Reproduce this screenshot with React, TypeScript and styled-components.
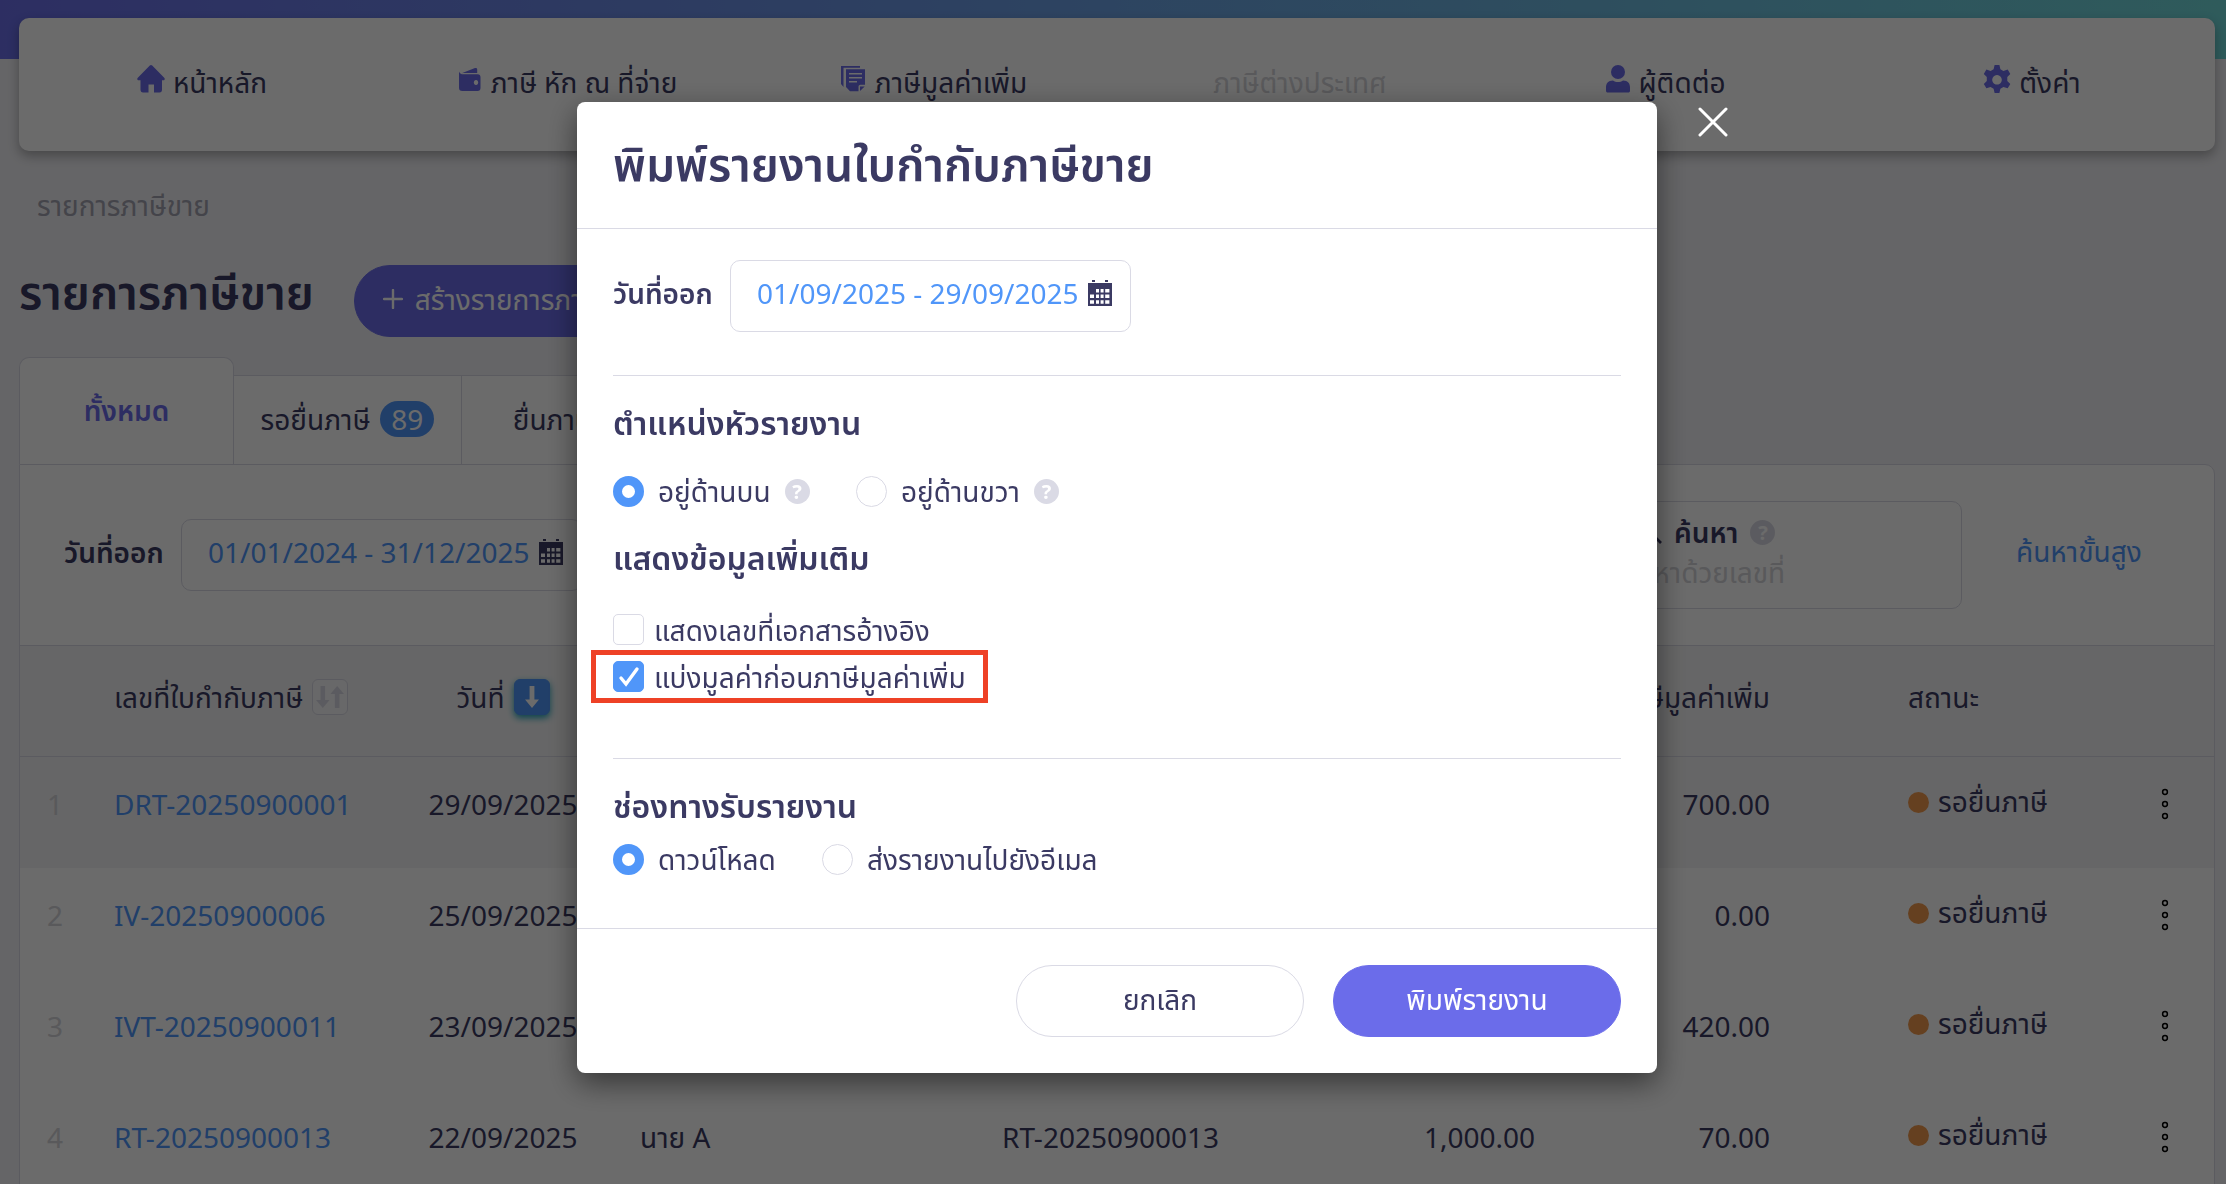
import React from "react";
import styled, { createGlobalStyle, css } from "styled-components";

const ink = "#3b3a63";
const blue = "#5096f9";
const purple = "#6b6cea";
const line = "#dadae5";

const GlobalStyle = createGlobalStyle`
  *, *::before, *::after { box-sizing: border-box; }
  body {
    margin: 0;
    overflow: hidden;
    background: #f1f1f5;
    color: ${ink};
    font-family: "Noto Sans", "Noto Sans Thai", sans-serif;
    font-size: 28px;
    font-weight: 400;
    line-height: 40px;
  }
  button, input { font: inherit; color: inherit; }
  a { color: inherit; text-decoration: none; }
  h1, h2, h3, p { margin: 0; }
`;

const Page = styled.div`
  height: 100vh;
  overflow: hidden;
  padding: 18px 11px 0 19px;
  background: linear-gradient(90deg, #6b6fea 0%, #6da3e6 50%, #70d9da 100%) 0 0 / 100% 59px no-repeat;
`;

const Nav = styled.nav`
  display: grid;
  grid-template-columns: repeat(6, 1fr);
  height: 133px;
  padding-top: 44px;
  background: #fff;
  border-radius: 10px;
  box-shadow: 0 5px 12px rgba(0, 0, 0, 0.3);
`;

const NavLink = styled.a<{ $muted?: boolean }>`
  display: flex;
  justify-content: center;
  gap: 8px;
  height: 44px;
  white-space: nowrap;
  color: ${(p) => (p.$muted ? "#d3d3d8" : ink)};
  svg { flex: none; margin-top: 3px; fill: ${purple}; }
`;

const Crumb = styled.p`
  padding: 34px 18px 0;
  color: #a2a2b0;
`;

const TitleRow = styled.header`
  display: flex;
  align-items: flex-start;
  gap: 40px;
  margin-top: 40px;
  height: 72px;
`;

const PageTitle = styled.h1`
  min-width: 292px;
  font-size: 46px;
  line-height: 52px;
  font-weight: 600;
  white-space: nowrap;
`;

const buttonBase = css`
  height: 72px;
  padding: 0 28px 4px;
  border-radius: 36px;
  border: 1px solid ${purple};
  background: ${purple};
  color: #fff;
  white-space: nowrap;
`;

const CreateButton = styled.button`
  ${buttonBase}
  display: flex;
  align-items: center;
  gap: 12px;
  width: 360px;
`;

const Tabs = styled.div`
  display: flex;
  align-items: flex-end;
  margin-top: 20px;
`;

const Tab = styled.button<{ $active?: boolean }>`
  display: flex;
  align-items: center;
  justify-content: center;
  gap: 10px;
  width: 228px;
  height: 89px;
  padding: 0 0 2px;
  border: 1px solid ${line};
  border-width: 1px 1px 0 0;
  background: #fff;
  white-space: nowrap;
  ${(p) =>
    p.$active &&
    css`
      width: 215px;
      height: 107px;
      border-width: 1px 1px 0 1px;
      border-radius: 10px 10px 0 0;
      color: ${purple};
      font-weight: 600;
    `}
`;

const Badge = styled.span`
  padding: 0 11px;
  border-radius: 18px;
  background: ${blue};
  color: #fff;
  line-height: 36px;
`;

const Panel = styled.section`
  border: 1px solid ${line};
  border-radius: 0 10px 0 0;
  background: #fff;
`;

const Filters = styled.div`
  display: flex;
  align-items: center;
  height: 180px;
  padding: 0 70px 0 44px;
`;

const FieldLabel = styled.label`
  flex: none;
  width: 117px;
  padding-bottom: 6px;
  font-weight: 600;
  white-space: nowrap;
`;

const DateBox = styled.div`
  display: flex;
  align-items: center;
  gap: 8px;
  width: 401px;
  height: 72px;
  padding: 0 18px 6px 26px;
  border: 1px solid ${line};
  border-radius: 10px;
  background: #fff;
  input {
    flex: 1;
    min-width: 0;
    padding: 0;
    border: 0;
    outline: 0;
    background: none;
    color: ${blue};
  }
`;

const SearchBox = styled.div`
  width: 360px;
  height: 108px;
  margin-left: auto;
  padding: 10px 16px;
  border: 1px solid ${line};
  border-radius: 10px;
  label {
    display: flex;
    align-items: center;
    gap: 12px;
    padding-left: 20px;
    font-weight: 600;
  }
  input {
    width: 100%;
    height: 40px;
    padding: 0;
    border: 0;
    outline: 0;
    background: none;
  }
  input::placeholder { color: #d3d3d8; opacity: 1; }
`;

const AdvancedLink = styled.a`
  width: 128px;
  margin-left: 54px;
  padding-bottom: 8px;
  color: ${blue};
  white-space: nowrap;
`;

const Help = styled.span`
  flex: none;
  width: 25px;
  height: 25px;
  border-radius: 50%;
  background: ${line};
  color: #fff;
  font-size: 20px;
  font-weight: 700;
  line-height: 25px;
  text-align: center;
`;

const Table = styled.table`
  width: 100%;
  table-layout: fixed;
  border-collapse: separate;
  border-spacing: 0;
  white-space: nowrap;
`;

const HeadRow = styled.tr`
  height: 112px;
  background: #f4f4f5;
`;

const Row = styled.tr<{ $shaded?: boolean }>`
  height: 111px;
  background: ${(p) => (p.$shaded ? "#f4f4f5" : "#fff")};
`;

type CellProps = { $align?: "left" | "center" | "right"; $indent?: number };

const Th = styled.th<CellProps>`
  padding: 0 20px 8px ${(p) => p.$indent ?? 20}px;
  border: 1px solid ${line};
  border-width: 1px 0;
  text-align: ${(p) => p.$align ?? "left"};
  font-weight: 400;
`;

const Td = styled.td<CellProps>`
  padding: 0 20px 18px ${(p) => p.$indent ?? 20}px;
  text-align: ${(p) => p.$align ?? "left"};
  a { color: ${blue}; }
`;

const RowNumber = styled(Td)`
  color: #d3d3d8;
`;

const HeadLabel = styled.span`
  display: inline-flex;
  align-items: center;
  gap: 9px;
`;

const SortButton = styled.button<{ $active?: boolean }>`
  display: flex;
  align-items: center;
  justify-content: center;
  width: 36px;
  height: 36px;
  padding: 0;
  border: 1px solid ${(p) => (p.$active ? blue : line)};
  border-radius: 6px;
  background: ${(p) => (p.$active ? blue : "#f8f8f9")};
  color: ${(p) => (p.$active ? "#fff" : line)};
  box-shadow: ${(p) => (p.$active ? "0 3px 7px #1aa0b8" : "none")};
`;

const Status = styled.span`
  display: flex;
  align-items: center;
  gap: 9px;
  padding-bottom: 6px;
  &::before {
    content: "";
    width: 21px;
    height: 21px;
    margin-top: 4px;
    border-radius: 50%;
    background: #f09a4e;
  }
`;

const MenuButton = styled.button`
  display: block;
  margin: 0 auto;
  padding: 0;
  border: 0;
  background: none;
  color: #000;
  line-height: 0;
`;

const Overlay = styled.div`
  position: fixed;
  inset: 0;
  display: flex;
  align-items: flex-start;
  justify-content: center;
  padding: 102px 0 0 8px;
  background: rgba(0, 0, 0, 0.58);
`;

const Modal = styled.section`
  position: relative;
  width: 1080px;
  background: #fff;
  border-radius: 8px;
  box-shadow: 0 10px 30px rgba(0, 0, 0, 0.5);
`;

const CloseButton = styled.button`
  position: absolute;
  top: 5px;
  right: -71px;
  padding: 0;
  border: 0;
  background: none;
  color: #fff;
  line-height: 0;
`;

const ModalHeader = styled.header`
  height: 127px;
  padding: 31px 36px 0;
  border-bottom: 1px solid ${line};
`;

const ModalTitle = styled.h2`
  font-size: 46px;
  line-height: 60px;
  font-weight: 600;
`;

const ModalBody = styled.div`
  padding: 31px 36px 49px;
`;

const DateRow = styled.div`
  display: flex;
  align-items: center;
`;

const Divider = styled.hr<{ $gap: number }>`
  height: 1px;
  margin: ${(p) => p.$gap}px 0 0;
  border: 0;
  background: ${line};
`;

const Group = styled.div`
  padding-top: 23px;
`;

const GroupTitle = styled.h3<{ $gap?: number }>`
  margin-bottom: ${(p) => p.$gap ?? 24}px;
  font-size: 32px;
  line-height: 48px;
  font-weight: 600;
`;

const Options = styled.div`
  display: flex;
  align-items: center;
  height: 40px;
`;

const Option = styled.label<{ $width?: number }>`
  display: flex;
  align-items: center;
  gap: 14px;
  width: ${(p) => (p.$width ? `${p.$width}px` : "auto")};
  white-space: nowrap;
`;

const Radio = styled.input`
  appearance: none;
  flex: none;
  width: 31px;
  height: 31px;
  margin: 0;
  border: 1px solid ${line};
  border-radius: 50%;
  background: #fff;
  &:checked { border: 9px solid ${blue}; }
`;

const Check = styled.label`
  display: flex;
  align-items: center;
  gap: 10px;
  height: 47px;
  white-space: nowrap;
`;

const CheckMark = styled.span`
  position: relative;
  flex: none;
  width: 31px;
  height: 31px;
  line-height: 0;
  input {
    appearance: none;
    width: 31px;
    height: 31px;
    margin: 0;
    border: 1px solid ${line};
    border-radius: 5px;
    background: #fff;
  }
  input:checked { border-color: ${blue}; background: ${blue}; }
  svg { position: absolute; inset: 0; pointer-events: none; }
`;

const Highlight = styled.div`
  width: 397px;
  margin: -3px 0 0 -22px;
  padding-left: 17px;
  border: 5px solid #ee4126;
  label { height: 43px; }
`;

const ModalFooter = styled.footer`
  display: flex;
  justify-content: flex-end;
  gap: 29px;
  padding: 36px;
  border-top: 1px solid ${line};
`;

const FooterButton = styled.button<{ $outline?: boolean }>`
  ${buttonBase}
  width: 288px;
  ${(p) => p.$outline && css`border-color: ${line}; background: #fff; color: ${ink};`}
`;

const HomeIcon = () => (
  <svg width="28" height="28" viewBox="0 0 28 28"><path d="M12.8.6a1.7 1.7 0 0 1 2.4 0l12 12.2c1 1 .5 2.4-.9 2.4H25v9.6c0 1.600-.8 2.700-2.400 2.700H17v-8h-5.500v8H6c-1.600 0-2.500-1.100-2.500-2.700v-9.600H1.700C.3 15.200-.2 13.800.8 12.800z" /></svg>
);
const WalletIcon = () => (
  <svg width="24" height="28" viewBox="0 0 24 28"><path d="M2 8.500 16 3c1.500-.4 2.200.3 2.200 1.600V8H4z" /><path fillRule="evenodd" d="M0 6.500C1 9 2.500 9.200 4 9.200h14.500c2 0 3 1 3 3V23c0 2-1 3-3 3H3.500C1 26 0 25 0 22.800zM17 15a2.200 2.500 0 1 0 .01 0z" /></svg>
);
const DocsIcon = () => (
  <svg width="26" height="28" viewBox="0 0 26 28"><path d="M0 1h19v1.800H2.500V22L0 19z" /><path fillRule="evenodd" d="M5 4.300h19v15.500h-4.500c-1.500 0-2 1-2 2v4.500H9L5 22zM8 8h13v1.600H8zm0 4h13v1.600H8zm0 4h8v1.600H8z" /><path d="M19 26v-4.500h4.700z" /></svg>
);
const UserIcon = () => (
  <svg width="24" height="28" viewBox="0 0 24 28"><ellipse cx="12" cy="7" rx="7" ry="7" /><path d="M7 15.500c3 2 7 2 10 0 5 0 7 3 7 7v3c0 1.500-.6 2-2 2H2c-1.400 0-2-.5-2-2v-3c0-4 2-7 7-7z" /></svg>
);
const GearIcon = () => (
  <svg width="28" height="30" viewBox="0 0 28 30"><path fillRule="evenodd" d="M11.600 0h4.800l1 4.200 3 1.700 4.300-1.300 2.600 4.300-3 3.100v3.900l3 3.200-2.600 4.200-4.300-1.200-3 1.700-1 4.200h-4.800l-1-4.200-3-1.700-4.200 1.200-2.600-4.200 3-3.200V12l-3-3.100 2.600-4.300 4.200 1.300 3-1.700zM14 10a4.800 4.800 0 1 0 .01 0z" /></svg>
);
const CalendarIcon = () => (
  <svg width="24" height="26" viewBox="0 0 24 26" fill={ink}>
    <path fillRule="evenodd" d="M4 0h3v2H4zM17 0h3v2h-3zM0 3h24v23H0zM8 9v3.500h3V9zm4.600 0v3.500h3V9zm4.600 0v3.500h4.200V9zM2 14.600V18h4v-3.400zm6 0V18h3v-3.400zm4.600 0V18h3v-3.400zm4.600 0V18h4.200v-3.400zM2 20.200v3.600h4v-3.600zm6 0v3.600h3v-3.600zm4.600 0v3.600h3v-3.600zm4.600 0v3.600h4.200v-3.600z" />
  </svg>
);
const PlusIcon = () => (
  <svg width="20" height="20" viewBox="0 0 20 20" stroke="#fff" strokeWidth="2.4" strokeLinecap="round"><path d="M10 1v18M1 10h18" /></svg>
);
const SearchIcon = () => (
  <svg width="23" height="23" viewBox="0 0 23 23" fill="none" stroke={ink} strokeWidth="2.600"><circle cx="9" cy="9" r="7" /><path d="m14 14 8 8" /></svg>
);
const SortIcon = ({ single }: { single?: boolean }) =>
  single ? (
    <svg width="14" height="24" viewBox="0 0 14 24" fill="currentColor"><path d="M4.600 1h4.800v13.500H14L7 23 0 14.500h4.600z" /></svg>
  ) : (
    <svg width="28" height="24" viewBox="0 0 28 24" fill="currentColor"><path d="M4.500 1h4.600v14h4.500L6.800 23 0 15h4.500zM18.900 23h4.600V9H28l-6.800-8-6.800 8h4.500z" /></svg>
  );
const DotsIcon = () => (
  <svg width="8" height="32" viewBox="0 0 8 32" fill="none" stroke="currentColor" strokeWidth="1.500"><circle cx="4" cy="4" r="2.400" /><circle cx="4" cy="16" r="2.400" /><circle cx="4" cy="28" r="2.400" /></svg>
);
const CloseIcon = () => (
  <svg width="30" height="30" viewBox="0 0 30 30" stroke="currentColor" strokeWidth="3" strokeLinecap="round"><path d="M2 2l26 26M28 2 2 28" /></svg>
);

const navItems = [
  { label: "หน้าหลัก", icon: <HomeIcon /> },
  { label: "ภาษี หัก ณ ที่จ่าย", icon: <WalletIcon /> },
  { label: "ภาษีมูลค่าเพิ่ม", icon: <DocsIcon /> },
  { label: "ภาษีต่างประเทศ", muted: true },
  { label: "ผู้ติดต่อ", icon: <UserIcon /> },
  { label: "ตั้งค่า", icon: <GearIcon /> },
];

const invoices = [
  { id: "DRT-20250900001", date: "29/09/2025", name: "", ref: "", amount: "", vat: "700.00" },
  { id: "IV-20250900006", date: "25/09/2025", name: "", ref: "", amount: "", vat: "0.00" },
  { id: "IVT-20250900011", date: "23/09/2025", name: "", ref: "", amount: "", vat: "420.00" },
  { id: "RT-20250900013", date: "22/09/2025", name: "นาย A", ref: "RT-20250900013", amount: "1,000.00", vat: "70.00" },
];

const columnWidths = [74, 292, 234, undefined, 348, 225, 235, 325, 99];
const statusIndent = 118;

const DateField = ({ id, value }: { id: string; value: string }) => (
  <DateBox>
    <input id={id} defaultValue={value} />
    <CalendarIcon />
  </DateBox>
);

function PrintDialog() {
  return (
    <Overlay>
      <Modal role="dialog" aria-modal="true" aria-labelledby="print-title">
        <CloseButton aria-label="ปิด"><CloseIcon /></CloseButton>
        <ModalHeader>
          <ModalTitle id="print-title">พิมพ์รายงานใบกำกับภาษีขาย</ModalTitle>
        </ModalHeader>
        <ModalBody>
          <DateRow>
            <FieldLabel htmlFor="report-date">วันที่ออก</FieldLabel>
            <DateField id="report-date" value="01/09/2025 - 29/09/2025" />
          </DateRow>
          <Divider $gap={43} />
          <Group role="radiogroup" aria-labelledby="position-title">
            <GroupTitle id="position-title">ตำแหน่งหัวรายงาน</GroupTitle>
            <Options>
              <Option $width={243}>
                <Radio type="radio" name="position" defaultChecked />อยู่ด้านบน<Help>?</Help>
              </Option>
              <Option>
                <Radio type="radio" name="position" />อยู่ด้านขวา<Help>?</Help>
              </Option>
            </Options>
          </Group>
          <Group role="group" aria-labelledby="extra-title">
            <GroupTitle id="extra-title">แสดงข้อมูลเพิ่มเติม</GroupTitle>
            <Check>
              <CheckMark><input type="checkbox" /></CheckMark>
              แสดงเลขที่เอกสารอ้างอิง
            </Check>
            <Highlight>
              <Check>
                <CheckMark>
                  <input type="checkbox" defaultChecked />
                  <svg width="31" height="31" viewBox="0 0 31 31" fill="none" stroke="#fff" strokeWidth="3.400" strokeLinecap="round"><path d="m8 17 5 6L24 8" /></svg>
                </CheckMark>
                แบ่งมูลค่าก่อนภาษีมูลค่าเพิ่ม
              </Check>
            </Highlight>
          </Group>
          <Divider $gap={55} />
          <Group role="radiogroup" aria-labelledby="channel-title">
            <GroupTitle id="channel-title" $gap={9}>ช่องทางรับรายงาน</GroupTitle>
            <Options>
              <Option $width={209}>
                <Radio type="radio" name="channel" defaultChecked />ดาวน์โหลด
              </Option>
              <Option>
                <Radio type="radio" name="channel" />ส่งรายงานไปยังอีเมล
              </Option>
            </Options>
          </Group>
        </ModalBody>
        <ModalFooter>
          <FooterButton $outline>ยกเลิก</FooterButton>
          <FooterButton>พิมพ์รายงาน</FooterButton>
        </ModalFooter>
      </Modal>
    </Overlay>
  );
}

export default function App() {
  return (
    <>
      <GlobalStyle />
      <Page>
        <Nav>
          {navItems.map((item) => (
            <NavLink key={item.label} href="#" $muted={item.muted}>{item.icon}{item.label}</NavLink>
          ))}
        </Nav>
        <Crumb>รายการภาษีขาย</Crumb>
        <TitleRow>
          <PageTitle>รายการภาษีขาย</PageTitle>
          <CreateButton><PlusIcon />สร้างรายการภาษีขาย</CreateButton>
        </TitleRow>
        <Tabs>
          <Tab $active>ทั้งหมด</Tab>
          <Tab>รอยื่นภาษี<Badge>89</Badge></Tab>
          <Tab>ยื่นภาษีแล้ว</Tab>
        </Tabs>
        <Panel>
          <Filters>
            <FieldLabel htmlFor="issue-date">วันที่ออก</FieldLabel>
            <DateField id="issue-date" value="01/01/2024 - 31/12/2025" />
            <SearchBox>
              <label htmlFor="search"><SearchIcon />ค้นหา<Help>?</Help></label>
              <input id="search" placeholder="ค้นหาด้วยเลขที่" />
            </SearchBox>
            <AdvancedLink href="#">ค้นหาขั้นสูง</AdvancedLink>
          </Filters>
          <Table>
            <colgroup>
              {columnWidths.map((width, i) => <col key={i} width={width} />)}
            </colgroup>
            <thead>
              <HeadRow>
                <Th />
                <Th><HeadLabel>เลขที่ใบกำกับภาษี<SortButton aria-label="เรียงเลขที่"><SortIcon /></SortButton></HeadLabel></Th>
                <Th $align="center"><HeadLabel>วันที่<SortButton $active aria-label="เรียงวันที่"><SortIcon single /></SortButton></HeadLabel></Th>
                <Th />
                <Th />
                <Th />
                <Th $align="right">ภาษีมูลค่าเพิ่ม</Th>
                <Th $indent={statusIndent}>สถานะ</Th>
                <Th />
              </HeadRow>
            </thead>
            <tbody>
              {invoices.map((row, i) => (
                <Row key={row.id} $shaded={i === 0}>
                  <RowNumber $indent={27}>{i + 1}</RowNumber>
                  <Td><a href="#">{row.id}</a></Td>
                  <Td $align="center">{row.date}</Td>
                  <Td>{row.name}</Td>
                  <Td>{row.ref}</Td>
                  <Td $align="right">{row.amount}</Td>
                  <Td $align="right">{row.vat}</Td>
                  <Td $indent={statusIndent}><Status>รอยื่นภาษี</Status></Td>
                  <Td $align="center"><MenuButton aria-label="เมนู"><DotsIcon /></MenuButton></Td>
                </Row>
              ))}
            </tbody>
          </Table>
        </Panel>
      </Page>
      <PrintDialog />
    </>
  );
}
